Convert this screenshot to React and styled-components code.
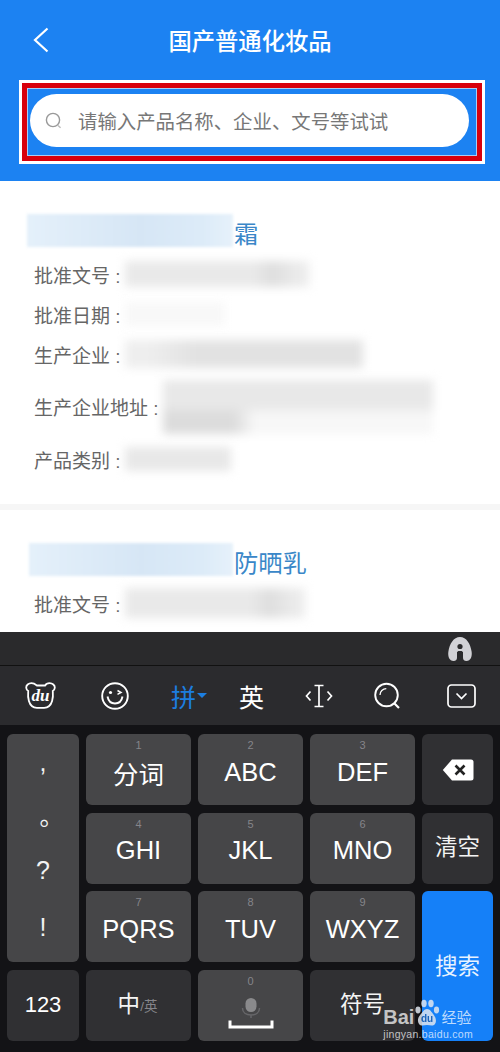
import React from "react";
import styled, { createGlobalStyle } from "styled-components";

const CJK = `"Liberation Sans", "Noto Sans CJK SC", sans-serif`;

const GlobalStyle = createGlobalStyle`
  html, body {
    margin: 0;
    padding: 0;
    background: #fff;
    font-family: ${CJK};
  }
`;

const SMUDGE_ROW = "linear-gradient(90deg, #e9e9e9 0 70%, #dedede 80%, #ececec 95%)";
const SMUDGE_FAINT = "#f8f8f8";
const SMUDGE_LONG = "linear-gradient(90deg, #eeeeee 0 10%, #e2e2e2 30% 100%)";
const SMUDGE_ADDRESS =
  "linear-gradient(#e8e8e8 0 50%, transparent 62%), linear-gradient(90deg, #dcdcdc 0 26%, #f7f7f7 34%)";

const RECORDS = [
  {
    suffix: "霜",
    blurWidth: 206,
    leftPad: 27,
    rows: [
      { label: "批准文号", blur: { w: 184, h: 26, tone: SMUDGE_ROW } },
      { label: "批准日期", blur: { w: 100, h: 24, tone: SMUDGE_FAINT } },
      { label: "生产企业", blur: { w: 238, h: 28, tone: SMUDGE_LONG } },
      { label: "生产企业地址", tall: true, blur: { w: 270, h: 54, tone: SMUDGE_ADDRESS } },
      { label: "产品类别", blur: { w: 106, h: 24, tone: "#e8e8e8" } },
    ],
  },
  {
    suffix: "防晒乳",
    blurWidth: 204,
    leftPad: 29,
    rows: [{ label: "批准文号", blur: { w: 180, h: 30, tone: SMUDGE_ROW } }],
  },
];

const KEYS = [
  { num: "1", text: "分词", col: 2, row: 1 },
  { num: "2", text: "ABC", col: 3, row: 1 },
  { num: "3", text: "DEF", col: 4, row: 1 },
  { num: "4", text: "GHI", col: 2, row: 2 },
  { num: "5", text: "JKL", col: 3, row: 2 },
  { num: "6", text: "MNO", col: 4, row: 2 },
  { num: "7", text: "PQRS", col: 2, row: 3 },
  { num: "8", text: "TUV", col: 3, row: 3 },
  { num: "9", text: "WXYZ", col: 4, row: 3 },
];

const App = () => {
  return (
    <Page>
      <GlobalStyle />
      <Header>
        <NavBar>
          <BackButton>
            <svg width="16" height="26" viewBox="0 0 16 26" fill="none">
              <path d="M14.5 1.5 2 13l12.5 11.5" stroke="#fff" strokeWidth="2.2" />
            </svg>
          </BackButton>
          <Title>国产普通化妆品</Title>
        </NavBar>
        <HighlightFrame>
          <RedFrame>
            <InnerFrame>
              <SearchPill>
                <svg width="18" height="18" viewBox="0 0 18 18" fill="none">
                  <circle cx="8" cy="8" r="6.6" stroke="#999" strokeWidth="1.4" />
                  <path d="m13 13.4 2.6 2.4" stroke="#bbb" strokeWidth="1.4" />
                </svg>
                <Placeholder>请输入产品名称、企业、文号等试试</Placeholder>
              </SearchPill>
            </InnerFrame>
          </RedFrame>
        </HighlightFrame>
      </Header>

      <Content>
        {RECORDS.map((record, i) => (
          <Record key={record.suffix} $first={i === 0} $leftPad={record.leftPad}>
            <RecordTitle>
              <BlurName $w={record.blurWidth} />
              <TitleText>{record.suffix}</TitleText>
            </RecordTitle>
            {record.rows.map((row) => (
              <Row key={row.label} $tall={row.tall} $leftPad={34 - record.leftPad}>
                <RowLabel>{row.label} :</RowLabel>
                <BlurValue $w={row.blur.w} $h={row.blur.h} $tone={row.blur.tone} />
              </Row>
            ))}
          </Record>
        ))}
      </Content>

      <Keyboard>
        <AssistBar>
          <svg width="26" height="26" viewBox="0 0 26 26">
            <path
              fill="#d2d2d6"
              d="M13 1C6.5 1 2.6 8 1.4 15.5.6 20.5 2.5 25 6.5 25c2.6 0 3.5-1.3 3.5-3.500V16h6v5.500c0 2.200.9 3.500 3.500 3.500 4 0 5.900-4.500 5.100-9.500C23.400 8 19.500 1 13 1Z"
            />
            <circle cx="13" cy="10.5" r="2.6" fill="#2a2a2c" />
            <rect x="10.5" y="15" width="5" height="10" rx="1" fill="#2a2a2c" />
          </svg>
        </AssistBar>
        <Toolbar>
          <ToolCell>
            <svg width="31" height="27" viewBox="0 0 31 27" fill="none">
              <path
                d="M6.5 1.2C3.500 1.200 1 3.200 1.200 5.800c.1 1.500 1 2.600 2 3.200-.3 3.500-.3 7 .7 10 1.100 3.800 4 6.800 8 6.800h7.200c4 0 6.900-3 8-6.800 1-3 1-6.500.7-10 1-.6 1.900-1.700 2-3.200.2-2.600-2.300-4.600-5.300-4.600-2 0-3.600.9-4.400 2.300h-8.200C10.100 2.100 8.500 1.200 6.500 1.200Z"
                stroke="#fff"
                strokeWidth="1.8"
              />
              <DuMark x="15.5" y="19">du</DuMark>
            </svg>
          </ToolCell>
          <ToolCell $gap={45}>
            <svg width="28" height="28" viewBox="0 0 28 28" fill="none" stroke="#fff">
              <circle cx="14" cy="14" r="12.8" strokeWidth="1.9" />
              <path d="M6.5 14.500c.8 4.200 3.700 7 7.500 7s6.700-2.800 7.500-7" strokeWidth="1.900" />
              <circle cx="9.5" cy="10.5" r="1.6" fill="#fff" stroke="none" />
              <path d="m16.500 8.500 3.500 2-3.500 1.800" strokeWidth="1.500" />
            </svg>
          </ToolCell>
          <ToolCell $gap={42}>
            <ToolText $active>拼</ToolText>
            <Caret />
          </ToolCell>
          <ToolCell $gap={32}>
            <ToolText>英</ToolText>
          </ToolCell>
          <ToolCell $gap={41}>
            <svg width="28" height="24" viewBox="0 0 28 24" fill="none" stroke="#fff" strokeWidth="1.7">
              <path d="M5.500 7.500 1.500 12l4 4.500M22.500 7.500l4 4.500-4 4.500M9.500 1.500h9M9.500 22.500h9M14 1.500v21" />
            </svg>
          </ToolCell>
          <ToolCell $gap={41}>
            <svg width="27" height="28" viewBox="0 0 27 28" fill="none" stroke="#fff">
              <circle cx="12.5" cy="13" r="11.3" strokeWidth="1.9" />
              <path d="M6 13c0-3.500 2.800-6.300 6.300-6.300" strokeWidth="1.3" />
              <path d="m20.500 21.500 4.500 4.500" strokeWidth="2.2" />
            </svg>
          </ToolCell>
          <ToolCell $gap={46}>
            <svg width="29" height="24" viewBox="0 0 29 24" fill="none" stroke="#fff">
              <rect x="1" y="1" width="27" height="22" rx="3.5" strokeWidth="1.7" />
              <path d="m9.500 9.500 5 5 5-5" strokeWidth="1.7" />
            </svg>
          </ToolCell>
        </Toolbar>
        <KeyGrid>
          <PunctKey>
            <span>,</span>
            <RoundStop>。</RoundStop>
            <span>?</span>
            <span>!</span>
          </PunctKey>
          {KEYS.map((key) => (
            <Key key={key.num} $col={key.col} $row={key.row}>
              <KeyNum>{key.num}</KeyNum>
              <KeyLabel>{key.text}</KeyLabel>
            </Key>
          ))}
          <Key $col={5} $row={1} $dim>
            <svg width="32" height="22" viewBox="0 0 32 22">
              <path
                fill="#fff"
                d="M10 .5h19A2.500 2.500 0 0 1 31.500 3v16a2.500 2.500 0 0 1-2.500 2.500H10L.8 11 10 .5Z"
              />
              <path d="m13.500 6.500 9 9m0-9-9 9" stroke="#222" strokeWidth="2.6" />
            </svg>
          </Key>
          <Key $col={5} $row={2} $dim>
            <SideLabel>清空</SideLabel>
          </Key>
          <SearchKey>搜索</SearchKey>
          <Key $col={1} $row={4} $dim>
            <DigitLabel>123</DigitLabel>
          </Key>
          <Key $col={2} $row={4} $dim>
            <LangRow>
              <SideLabel>中</SideLabel>
              <LangHint>/英</LangHint>
            </LangRow>
          </Key>
          <Key $col={3} $row={4}>
            <KeyNum>0</KeyNum>
            <SpaceGlyph>
              <svg width="46" height="32" viewBox="0 0 46 32" fill="none">
                <rect x="17.5" y="0" width="11" height="14" rx="5.5" fill="#8a8a8c" />
                <path d="M14.500 10c0 4.500 3.500 7 8.500 7s8.500-2.500 8.500-7M23 17v3" stroke="#666669" strokeWidth="1.5" />
                <path d="M2 22.500V29h42v-6.500" stroke="#fff" strokeWidth="3" />
              </svg>
            </SpaceGlyph>
          </Key>
          <Key $col={4} $row={4} $dim>
            <SideLabel>符号</SideLabel>
          </Key>
        </KeyGrid>
        <Watermark>
          <WatermarkTop>
            <WatermarkBai>Bai</WatermarkBai>
            <svg width="26" height="28" viewBox="0 0 26 28" fill="#dfe6ef" opacity="0.85">
              <ellipse cx="4" cy="11" rx="2.6" ry="3.4" />
              <ellipse cx="10" cy="4.5" rx="2.7" ry="3.7" />
              <ellipse cx="17" cy="4.5" rx="2.7" ry="3.7" />
              <ellipse cx="22.5" cy="11" rx="2.6" ry="3.4" />
              <path d="M13 10c-3 0-4 3-6.500 5.500S3 22 5 25c2 2.500 5 1 8 1s6 1.500 8-1c2-3 .5-7-1.500-9.500S16 10 13 10Z" />
              <PawMark x="13" y="23">du</PawMark>
            </svg>
            <WatermarkCn>经验</WatermarkCn>
          </WatermarkTop>
          <WatermarkUrl>jingyan.baidu.com</WatermarkUrl>
        </Watermark>
      </Keyboard>
    </Page>
  );
};

const Page = styled.div`
  display: flex;
  flex-direction: column;
  width: 500px;
  height: 1052px;
  overflow: hidden;
  background: #fff;
`;

const Header = styled.header`
  flex: none;
  height: 181px;
  padding-left: 19px;
  box-sizing: border-box;
  background: #1c82f2;
`;

const NavBar = styled.div`
  position: relative;
  display: flex;
  align-items: center;
  justify-content: center;
  height: 80px;
  margin-left: -19px;
`;

const BackButton = styled.span`
  position: absolute;
  left: 33px;
  top: 27px;
  display: flex;
`;

const Title = styled.h1`
  margin: 0;
  font-size: 23.3px;
  font-weight: 500;
  color: #fff;
`;

const HighlightFrame = styled.div`
  width: 466px;
  height: 84px;
  box-sizing: border-box;
  border: 3px solid #fff;
`;

const RedFrame = styled.div`
  height: 100%;
  box-sizing: border-box;
  border: 5px solid #d8000c;
`;

const InnerFrame = styled.div`
  height: 100%;
  box-sizing: border-box;
  padding: 5px 7px 7px 2px;
  border: 1px solid #a9cdf5;
`;

const SearchPill = styled.div`
  display: flex;
  align-items: center;
  gap: 15px;
  height: 53px;
  padding-left: 15px;
  border-radius: 27px;
  background: #fff;
`;

const Placeholder = styled.span`
  font-size: 19.4px;
  color: #777;
  white-space: nowrap;
`;

const Content = styled.main`
  flex: 1;
  min-height: 0;
  overflow: hidden;
`;

const Record = styled.section`
  padding: 34px 0 25px ${(p) => p.$leftPad}px;
  border-top: ${(p) => (p.$first ? "0" : "6px solid #f6f6f6")};
`;

const RecordTitle = styled.div`
  display: flex;
  align-items: center;
  height: 34px;
  margin-bottom: 5px;
`;

const BlurName = styled.div`
  width: ${(p) => p.$w}px;
  height: 33px;
  margin-bottom: 4px;
  background: linear-gradient(90deg, #e4f0fa, #d6e6f5 55%, #dcebf8 85%, #e6f1fa);
  filter: blur(1.5px);
`;

const TitleText = styled.span`
  margin-left: 1px;
  font-size: 24.3px;
  color: #3a87c8;
`;

const Row = styled.div`
  display: flex;
  align-items: center;
  gap: 4px;
  height: ${(p) => (p.$tall ? 65 : 40)}px;
  padding-left: ${(p) => p.$leftPad}px;
`;

const RowLabel = styled.span`
  flex: none;
  font-size: 19px;
  color: #666;
  white-space: nowrap;
`;

const BlurValue = styled.div`
  width: ${(p) => p.$w}px;
  height: ${(p) => p.$h}px;
  background: ${(p) => p.$tone};
  filter: blur(5px);
`;

const Keyboard = styled.div`
  position: relative;
  flex: none;
  height: 420px;
  background: #131316;
`;

const AssistBar = styled.div`
  display: flex;
  align-items: center;
  justify-content: flex-end;
  height: 34px;
  padding-right: 27px;
  box-sizing: border-box;
  background: #2a2a2c;
  border-bottom: 1px solid #111;
`;

const Toolbar = styled.div`
  display: flex;
  align-items: center;
  height: 59px;
  padding-left: 25px;
  background: #2b2b2e;
`;

const ToolCell = styled.div`
  display: flex;
  align-items: center;
  flex: none;
  margin-left: ${(p) => p.$gap || 0}px;
  color: #fff;
`;

const DuMark = styled.text`
  font-family: "Liberation Serif", serif;
  font-size: 17px;
  font-style: italic;
  font-weight: 700;
  fill: #fff;
  text-anchor: middle;
`;

const PawMark = styled.text`
  font-family: "Liberation Sans", sans-serif;
  font-size: 10px;
  font-weight: 700;
  fill: #1d5fb0;
  text-anchor: middle;
`;

const ToolText = styled.span`
  font-size: 25px;
  color: ${(p) => (p.$active ? "#1c7ee0" : "#fff")};
`;

const Caret = styled.span`
  width: 0;
  height: 0;
  margin-left: 1px;
  border-left: 5px solid transparent;
  border-right: 5px solid transparent;
  border-top: 5px solid #1c7ee0;
`;

const KeyGrid = styled.div`
  display: grid;
  grid-template-columns: 72px 105px 105px 105px 71px;
  grid-template-rows: repeat(4, 71px);
  gap: 7.5px 7px;
  padding: 9px 7px 0;
`;

const Key = styled.div`
  grid-column: ${(p) => p.$col};
  grid-row: ${(p) => p.$row};
  position: relative;
  display: flex;
  align-items: center;
  justify-content: center;
  border-radius: 6px;
  background: ${(p) => (p.$dim ? "#303033" : "#464648")};
  color: #fff;
`;

const PunctKey = styled.div`
  grid-column: 1;
  grid-row: 1 / span 3;
  display: flex;
  flex-direction: column;
  align-items: center;
  justify-content: space-around;
  padding: 0 0 6px;
  border-radius: 6px;
  background: #464648;
  color: #f2f2f2;
  font-size: 25px;
`;

const RoundStop = styled.span`
  padding-left: 17px;
  font-size: 24px;
  line-height: 1;
`;

const KeyNum = styled.span`
  position: absolute;
  top: 4px;
  left: 0;
  right: 0;
  font-size: 11px;
  line-height: 14px;
  text-align: center;
  color: #85858a;
`;

const KeyLabel = styled.span`
  margin-top: 5px;
  font-size: 25.5px;
  color: #fff;
`;

const DigitLabel = styled.span`
  font-size: 22px;
  color: #fff;
`;

const SideLabel = styled.span`
  font-size: 22.5px;
  line-height: 1.1;
  color: #f4f4f4;
`;

const SearchKey = styled.div`
  grid-column: 5;
  grid-row: 3 / span 2;
  display: flex;
  align-items: center;
  justify-content: center;
  padding-bottom: 3px;
  border-radius: 6px;
  background: #1580f8;
  color: #e8f3ff;
  font-size: 22.5px;
`;

const LangRow = styled.div`
  display: flex;
  align-items: center;
  margin-left: -2px;
`;

const LangHint = styled.span`
  font-size: 13.5px;
  color: #85858a;
`;

const SpaceGlyph = styled.div`
  display: flex;
  padding-top: 18px;
`;

const Watermark = styled.div`
  position: absolute;
  right: 27px;
  bottom: 11px;
  color: rgba(255, 255, 255, 0.72);
  pointer-events: none;
`;

const WatermarkTop = styled.div`
  display: flex;
  align-items: flex-end;
`;

const WatermarkBai = styled.span`
  font-size: 20px;
  font-weight: 700;
  line-height: 20px;
`;

const WatermarkCn = styled.span`
  margin-left: 1px;
  font-size: 15px;
  line-height: 19px;
`;

const WatermarkUrl = styled.div`
  font-size: 10.5px;
  line-height: 14px;
  letter-spacing: 0.3px;
`;

export default App;
